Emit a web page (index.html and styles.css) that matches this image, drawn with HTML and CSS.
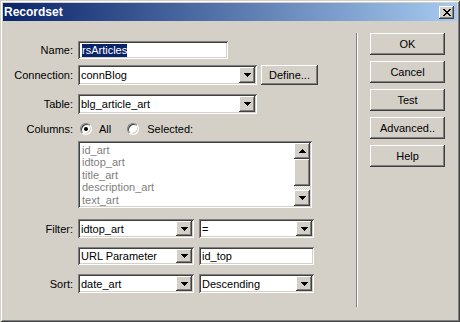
FILE: index.html
```html
<!DOCTYPE html>
<html>
<head>
<meta charset="utf-8">
<link rel="stylesheet" href="styles.css">
</head>
<body>
<div class="window">
  <div class="titlebar">
    <span class="title">Recordset</span>
    <div class="close">
      <svg width="8" height="7" viewBox="0 0 8 7">
        <rect x="0" y="0" width="2" height="1"/><rect x="6" y="0" width="2" height="1"/>
        <rect x="1" y="1" width="2" height="1"/><rect x="5" y="1" width="2" height="1"/>
        <rect x="2" y="2" width="4" height="1"/>
        <rect x="3" y="3" width="2" height="1"/>
        <rect x="2" y="4" width="4" height="1"/>
        <rect x="1" y="5" width="2" height="1"/><rect x="5" y="5" width="2" height="1"/>
        <rect x="0" y="6" width="2" height="1"/><rect x="6" y="6" width="2" height="1"/>
      </svg>
    </div>
  </div>
  <div class="content">
    <div class="form">
      <div class="row r-name">
        <span class="lbl">Name:</span>
        <div class="field w-name"><span class="val"><span class="hl">rsArticles</span></span></div>
      </div>
      <div class="row r-conn">
        <span class="lbl">Connection:</span>
        <div class="field combo w-wide"><span class="val">connBlog</span><span class="drop"><svg width="7" height="4" viewBox="0 0 7 4"><rect x="0" y="0" width="7" height="1"/><rect x="1" y="1" width="5" height="1"/><rect x="2" y="2" width="3" height="1"/><rect x="3" y="3" width="1" height="1"/></svg></span></div>
        <div class="btn define">Define...</div>
      </div>
      <div class="row r-table">
        <span class="lbl">Table:</span>
        <div class="field combo w-wide"><span class="val">blg_article_art</span><span class="drop"><svg width="7" height="4" viewBox="0 0 7 4"><rect x="0" y="0" width="7" height="1"/><rect x="1" y="1" width="5" height="1"/><rect x="2" y="2" width="3" height="1"/><rect x="3" y="3" width="1" height="1"/></svg></span></div>
      </div>
      <div class="row r-cols">
        <span class="lbl">Columns:</span>
        <span class="radio on"></span><span class="rlabel first">All</span>
        <span class="radio second"></span><span class="rlabel">Selected:</span>
      </div>
      <div class="listbox">
        <div class="items">
          <div>id_art</div>
          <div>idtop_art</div>
          <div>title_art</div>
          <div>description_art</div>
          <div>text_art</div>
        </div>
        <div class="scroll">
          <span class="sbtn"><svg width="7" height="4" viewBox="0 0 7 4"><rect x="3" y="0" width="1" height="1"/><rect x="2" y="1" width="3" height="1"/><rect x="1" y="2" width="5" height="1"/><rect x="0" y="3" width="7" height="1"/></svg></span>
          <span class="thumb"></span>
          <span class="track"></span>
          <span class="sbtn"><svg width="7" height="4" viewBox="0 0 7 4"><rect x="0" y="0" width="7" height="1"/><rect x="1" y="1" width="5" height="1"/><rect x="2" y="2" width="3" height="1"/><rect x="3" y="3" width="1" height="1"/></svg></span>
        </div>
      </div>
      <div class="row r-filter">
        <span class="lbl">Filter:</span>
        <div class="field combo w-half1"><span class="val">idtop_art</span><span class="drop"><svg width="7" height="4" viewBox="0 0 7 4"><rect x="0" y="0" width="7" height="1"/><rect x="1" y="1" width="5" height="1"/><rect x="2" y="2" width="3" height="1"/><rect x="3" y="3" width="1" height="1"/></svg></span></div>
        <div class="field combo w-half2"><span class="val">=</span><span class="drop"><svg width="7" height="4" viewBox="0 0 7 4"><rect x="0" y="0" width="7" height="1"/><rect x="1" y="1" width="5" height="1"/><rect x="2" y="2" width="3" height="1"/><rect x="3" y="3" width="1" height="1"/></svg></span></div>
      </div>
      <div class="row r-url">
        <span class="lbl"></span>
        <div class="field combo w-half1"><span class="val">URL Parameter</span><span class="drop"><svg width="7" height="4" viewBox="0 0 7 4"><rect x="0" y="0" width="7" height="1"/><rect x="1" y="1" width="5" height="1"/><rect x="2" y="2" width="3" height="1"/><rect x="3" y="3" width="1" height="1"/></svg></span></div>
        <div class="field w-half2"><span class="val">id_top</span></div>
      </div>
      <div class="row r-sort">
        <span class="lbl">Sort:</span>
        <div class="field combo w-half1"><span class="val">date_art</span><span class="drop"><svg width="7" height="4" viewBox="0 0 7 4"><rect x="0" y="0" width="7" height="1"/><rect x="1" y="1" width="5" height="1"/><rect x="2" y="2" width="3" height="1"/><rect x="3" y="3" width="1" height="1"/></svg></span></div>
        <div class="field combo w-half2"><span class="val">Descending</span><span class="drop"><svg width="7" height="4" viewBox="0 0 7 4"><rect x="0" y="0" width="7" height="1"/><rect x="1" y="1" width="5" height="1"/><rect x="2" y="2" width="3" height="1"/><rect x="3" y="3" width="1" height="1"/></svg></span></div>
      </div>
    </div>
    <div class="sep"></div>
    <div class="buttons">
      <div class="btn">OK</div>
      <div class="btn">Cancel</div>
      <div class="btn">Test</div>
      <div class="btn">Advanced..</div>
      <div class="btn">Help</div>
    </div>
  </div>
</div>
</body>
</html>
```
FILE: styles.css
```css
html, body {
  margin: 0;
  padding: 0;
  background: #D4D0C8;
}
body {
  font-family: "Liberation Sans", Arial, sans-serif;
  font-size: 11px;
  color: #000;
}
.window {
  width: 460px;
  height: 322px;
  box-sizing: border-box;
  padding: 3px;
  background: #D4D0C8;
  box-shadow: inset 1px 1px 0 #D4D0C8, inset -1px -1px 0 #404040,
              inset 2px 2px 0 #FFFFFF, inset -2px -2px 0 #808080;
  display: flex;
  flex-direction: column;
}
.titlebar {
  height: 18px;
  flex: none;
  display: flex;
  align-items: center;
  padding: 0 3px 0 1px;
  background: linear-gradient(to right, #0A246A, #A6CAF0);
}
.title {
  color: #fff;
  font-weight: bold;
  font-size: 12px;
  line-height: 18px;
}
.close {
  margin-left: auto;
  width: 15px;
  height: 13px;
  background: #D4D0C8;
  display: flex;
  align-items: center;
  justify-content: center;
  box-shadow: inset -1px -1px 0 #404040, inset 1px 1px 0 #FFFFFF,
              inset -2px -2px 0 #808080;
}
.close svg { display: block; }
.content {
  flex: 1;
  display: flex;
}
.form {
  width: 353px;
  flex: none;
  box-sizing: border-box;
  padding-top: 20px;
  display: flex;
  flex-direction: column;
}
.row {
  display: flex;
  align-items: center;
}
.lbl {
  width: 70px;
  flex: none;
  text-align: right;
  margin-right: 5px;
  white-space: nowrap;
}
.r-name { height: 18px; }
.r-conn { height: 20px; margin-top: 6px; }
.r-table { height: 20px; margin-top: 9px; }
.r-cols { height: 14px; margin-top: 8px; }
.r-filter { height: 19px; margin-top: 11px; }
.r-url { height: 18px; margin-top: 9px; }
.r-sort { height: 19px; margin-top: 9px; }

.field {
  height: 100%;
  box-sizing: border-box;
  padding: 2px;
  background: #fff;
  display: flex;
  align-items: stretch;
  box-shadow: inset 1px 1px 0 #808080, inset -1px -1px 0 #FFFFFF,
              inset 2px 2px 0 #404040, inset -2px -2px 0 #D4D0C8;
}
.val {
  flex: 1;
  display: flex;
  align-items: center;
  padding-left: 1px;
  white-space: nowrap;
  overflow: hidden;
}
.w-name { width: 150px; }
.w-name .val { padding-left: 2px; }
.w-wide { width: 179px; }
.w-half1 { width: 116px; }
.w-half2 { width: 115px; margin-left: 5px; }
.hl {
  background: #0A246A;
  color: #fff;
  line-height: 13px;
}
.drop, .sbtn, .thumb {
  background: #D4D0C8;
  box-shadow: inset -1px -1px 0 #404040, inset 1px 1px 0 #FFFFFF,
              inset -2px -2px 0 #808080;
}
.drop {
  width: 16px;
  flex: none;
  display: flex;
  align-items: center;
  justify-content: center;
}
.drop svg, .sbtn svg { display: block; }

.btn {
  width: 75px;
  height: 22px;
  box-sizing: border-box;
  display: flex;
  align-items: center;
  justify-content: center;
  background: #D4D0C8;
  box-shadow: inset -1px -1px 0 #404040, inset 1px 1px 0 #FFFFFF,
              inset -2px -2px 0 #808080;
}
.define {
  width: 57px;
  height: 20px;
  margin-left: 4px;
}

.radio {
  width: 12px;
  height: 12px;
  box-sizing: border-box;
  border-radius: 50%;
  background: #fff;
  border: 1px solid;
  border-color: #808080 #FFFFFF #FFFFFF #808080;
  box-shadow: inset 1px 1px 0 #404040, inset -1px -1px 0 #D4D0C8;
  margin-left: 2px;
  position: relative;
  flex: none;
}
.radio.on::after {
  content: "";
  position: absolute;
  left: 3px;
  top: 3px;
  width: 4px;
  height: 4px;
  border-radius: 50%;
  background: #000;
}
.radio.second { margin-left: 16px; }
.rlabel { margin-left: 8px; }
.rlabel.first { margin-left: 7px; }

.listbox {
  margin-left: 75px;
  margin-top: 5px;
  width: 234px;
  height: 67px;
  box-sizing: border-box;
  padding: 2px;
  background: #fff;
  display: flex;
  box-shadow: inset 1px 1px 0 #808080, inset -1px -1px 0 #FFFFFF,
              inset 2px 2px 0 #404040, inset -2px -2px 0 #D4D0C8;
}
.items {
  flex: 1;
  padding: 1px 2px 0;
  color: #808080;
  line-height: 12.4px;
  overflow: hidden;
  white-space: nowrap;
}
.scroll {
  width: 16px;
  flex: none;
  display: flex;
  flex-direction: column;
}
.sbtn {
  height: 16px;
  flex: none;
  display: flex;
  align-items: center;
  justify-content: center;
}
.thumb { height: 27px; flex: none; }
.track {
  height: 4px;
  flex: none;
  background-color: #D4D0C8;
  background-image: conic-gradient(#FFFFFF 25%, #D4D0C8 0 50%, #FFFFFF 0 75%, #D4D0C8 0);
  background-size: 2px 2px;
}

.sep {
  margin-top: 12px;
  height: 274px;
  width: 0;
  border-left: 1px solid #808080;
  border-right: 1px solid #FFFFFF;
  flex: none;
}
.buttons {
  margin-left: 12px;
  margin-top: 12px;
  display: flex;
  flex-direction: column;
  gap: 6px;
}
```
